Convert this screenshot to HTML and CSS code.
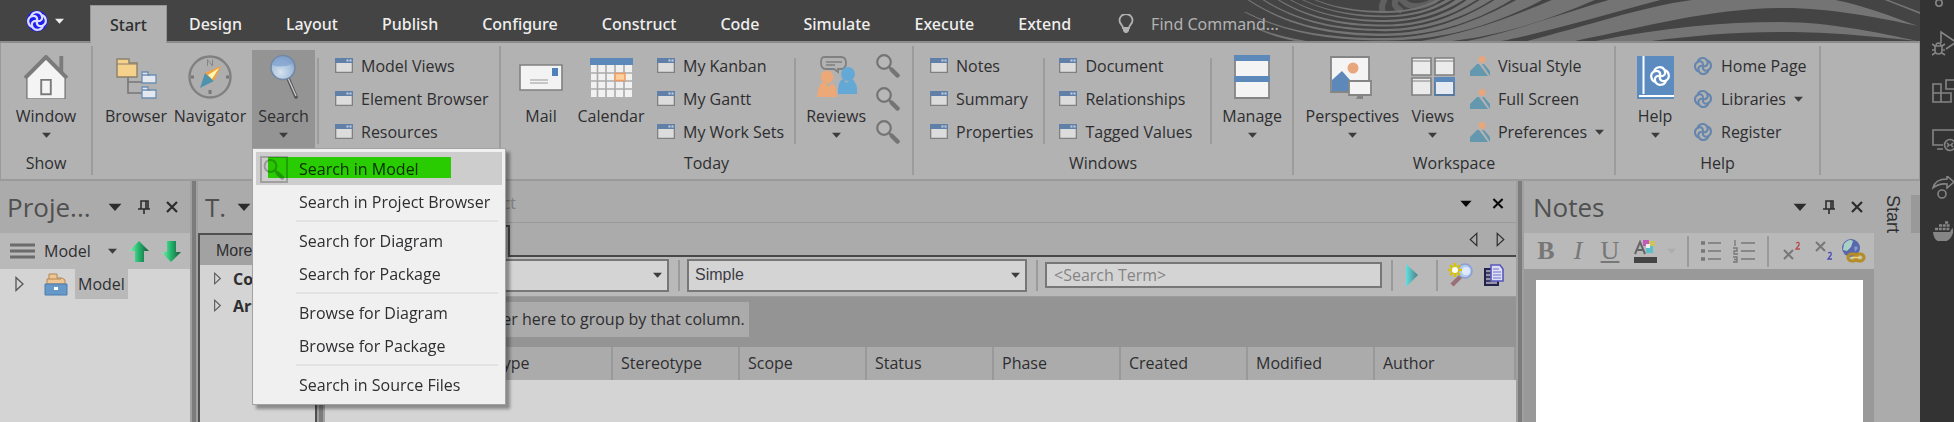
FILE: index.html
```html
<!DOCTYPE html>
<html lang="en">
<head>
<meta charset="utf-8">
<title>Model workspace</title>
<link rel="stylesheet" href="styles.css">
</head>
<body>
<svg class="defs" aria-hidden="true">
  <defs>
    <symbol id="knot" viewBox="0 0 24 24">
      <g fill="none" stroke="currentColor" stroke-width="2.4">
        <path d="M5.500 7A6.300 6.300 0 0 1 17 5.500A6.300 6.300 0 0 1 18.500 17A6.300 6.300 0 0 1 7 18.500A6.300 6.300 0 0 1 5.500 7z"/>
        <path d="M5.500 7C10 5 13 8 12 12C11 16 14 19 18.500 17M17 5.500C19 10 16 13 12 12C8 11 5 14 7 18.500"/>
      </g>
    </symbol>
    <symbol id="window" viewBox="0 0 18 15">
      <path d="M.5.500h17v14H.5z" fill="#dcdcdc" stroke="#808080" stroke-width="1.600"/>
      <path d="M0 0h18v5H0z" fill="#6080a8"/>
      <path d="M11.500 1.500h2v2h-2zM14.500 1.500h2v2h-2z" fill="#c3d0e0"/>
    </symbol>
    <symbol id="lens" viewBox="0 0 24 24">
      <circle cx="8" cy="8" r="6.800" fill="#bcbcbc" fill-opacity=".5" stroke="#747474" stroke-width="2.200"/>
      <path d="m13 13 3 3" stroke="#747474" stroke-width="2.500"/>
      <path d="m16 16 5.500 5.500" stroke="#747474" stroke-width="4.500" stroke-linecap="round"/>
    </symbol>
    <symbol id="scene" viewBox="0 0 20 20">
      <circle cx="12" cy="3.500" r="3.500" fill="#e8a67c"/>
      <path d="M0 20v-5l7-7h2l9 12zM12 8h2l6 7v5z" fill="#6398ae"/>
    </symbol>
    <symbol id="down" viewBox="0 0 8 5"><path d="M0 .5h8L4 5z" fill="currentColor"/></symbol>
    <symbol id="pin" viewBox="0 0 12 14"><path d="M3 1h7v8H3zM0 9h12M6 9v5M8 1v8" fill="none" stroke="currentColor" stroke-width="1.600"/></symbol>
    <symbol id="cross" viewBox="0 0 12 12"><path d="m1 1 10 10M11 1 1 11" stroke="currentColor" stroke-width="2.200"/></symbol>
    <symbol id="expand" viewBox="0 0 9 16"><path d="m1 1.500 7 6.500-7 6.500z" fill="none" stroke="currentColor" stroke-width="1.300"/></symbol>
    <linearGradient id="green" x2="1"><stop stop-color="#8ff0b4"/><stop offset=".45" stop-color="#27bd72"/><stop offset="1" stop-color="#17573b"/></linearGradient>
    <linearGradient id="teal" x2="1"><stop stop-color="#62dfe0"/><stop offset="1" stop-color="#4a8085"/></linearGradient>
    <radialGradient id="glass" cx=".4" cy=".7" r=".8"><stop stop-color="#d6e2ee"/><stop offset=".6" stop-color="#a3bddb"/><stop offset="1" stop-color="#6b8db8"/></radialGradient>
  </defs>
</svg>

<div class="shell">
  <div class="app">
    <header class="titlebar">
      <svg class="waves" viewBox="0 0 690 41" preserveAspectRatio="xMaxYMin slice" aria-hidden="true">
        <g fill="none" stroke="#606060" stroke-width="6"><path d="M155-1Q150 6 153 12M172 11Q160 5 168-2M170-3Q180 14 206 0"/></g>
        <g fill="#747474">
          <path d="M84-1C105 8 130 11 155 11C178 11 196 6 207-1L213-1C196 8 178 13 155 13C130 13 105 9 82-1z"/>
          <path d="M72-1C98 12 127 15.500 155 15.500C182 15.500 203 8 217-1L223-1C204 11 182 17.300 155 17.300C127 17.300 98 13 70-1z"/>
          <path d="M60-1C90 16 124 20 155 20C185 20 210 11 227-1L235-1C212 14 185 22 155 22C124 22 90 17 58-1z"/>
          <path d="M48-1C82 20 120 24.500 155 24.500C190 24.500 218 14 238-1L248-1C221 17 190 26.600 155 26.600C120 26.600 82 22 46-1z"/>
          <path d="M33-1C72 24 116 29 155 29C194 29 226 16 251-1L263-1C230 20 194 31.200 155 31.200C116 31.200 72 26 31-1z"/>
          <path d="M18-1C62 28 110 33.500 155 33.500C200 33.500 236 18 266-1L283-1C242 24 200 36 155 36C110 36 62 30 16-1z"/>
          <path d="M16 12C60 34 108 38 155 38C206 38 250 20 288-1L314-1C260 28 208 40.500 155 40.500C108 40.500 60 36 14 12z"/>
          <path d="M24 27C50 37 70 40 82 42L72 42C56 40 40 35 22 27z"/>
          <path d="M184 42C230 36 280 18 324-1L367-1C310 24 260 38 212 42z"/>
          <path d="M232 42C280 33 330 14 382-1L434-1C370 16 310 34 266 42z"/>
          <path d="M293 42C350 28 420 4 470-1L600-1C630 4 660 16 688 26C650 18 600 8 555 8C480 8 410 28 340 42z"/>
          <path d="M361 42C430 28 490 22 550 22C600 22 650 33 688 41C650 37 600 32 555 32C500 32 460 36 414 42z"/>
          <path d="M656-1 690 12V14Q675 8 652-1z"/>
        </g>
      </svg>
      <button class="appmenu" aria-label="Application menu">
        <svg class="i24"><circle cx="12" cy="12" r="10.500" fill="#1c1cf0"/><use href="#knot" x="1" y="1" width="22" height="22" color="#dcdcff"/></svg>
        <svg class="caret"><use href="#down"/></svg>
      </button>
      <nav class="tabs">
        <button class="tab tab-on">Start</button><button class="tab">Design</button><button class="tab">Layout</button><button class="tab">Publish</button><button class="tab">Configure</button><button class="tab">Construct</button><button class="tab">Code</button><button class="tab">Simulate</button><button class="tab">Execute</button><button class="tab">Extend</button>
      </nav>
      <label class="find">
        <svg width="16" height="20" viewBox="0 0 16 20"><path d="M5 14C5 11 1.500 10 1.500 6.500A6.300 6.300 0 0 1 14.500 6.500C14.500 10 11 11 11 14z" fill="none" stroke="#b2b2b2" stroke-width="1.800"/><path d="M5 15h6v2l-2 2H7l-2-2z" fill="#b2b2b2"/></svg>
        <input class="find-input" type="text" placeholder="Find Command..." aria-label="Find Command">
      </label>
    </header>

    <section class="ribbon">
      <div class="group g-show">
        <div class="tools">
          <button class="big"><svg viewBox="0 0 46 46"><path d="M37 13V1h4v20z" fill="#7b7b7b"/><path d="M3 46V24L23 4l20 20v22z" fill="#f4f4f4" stroke="#7b7b7b" stroke-width="1.500"/><path d="M1 24 23 2l22 22" fill="none" stroke="#7b7b7b" stroke-width="4"/><path d="M18 26h10v15H18z" fill="none" stroke="#7b7b7b" stroke-width="2"/></svg><span>Window</span><svg class="caret"><use href="#down"/></svg></button>
        </div>
        <h2 class="group-name">Show</h2>
      </div>
      <div class="group g-explore" aria-label="Explore">
        <div class="tools">
          <button class="big w-74"><svg viewBox="0 0 44 44"><path d="M14 22v16h14M14 27h14" fill="none" stroke="#777" stroke-width="1.600"/><path d="M3 4h12v4h8v14H3z" fill="#f6d18c" stroke="#8b806c" stroke-width="1.400"/><path d="M3 9h20" stroke="#8b806c"/><g fill="#e4e9ef" stroke="#6c8db3" stroke-width="1.300"><path d="M28 17h6v3h8v8H28zM28 32h6v3h8v8H28z"/><path d="M28 20h8M28 35h8"/></g></svg><span>Browser</span></button>
          <button class="big w-74"><svg viewBox="0 0 44 44"><circle cx="22" cy="22" r="20.500" fill="#aeaeae" stroke="#808080" stroke-width="2.400"/><path d="M19.500 11V4.500l5 6.500V4.500" fill="none" stroke="#858585"/><path d="M22 35v4M3 22h3M38 22h3" stroke="#777" stroke-width="3"/><path d="M12 33 17 18 26 26z" fill="#4d93ae"/><path d="M33 11 17 18l9 8z" fill="#f3a13a"/><path d="M31 13 20 20l4 4z" fill="#fff7b7"/></svg><span>Navigator</span></button>
          <div class="menu-host">
            <button class="big pressed" aria-expanded="true"><svg viewBox="0 0 44 44"><path d="m26 23 8 19" stroke="#555" stroke-width="3.600" stroke-linecap="round"/><path d="m26 23 8 18" stroke="#c7c7cf" stroke-width="1.400"/><circle cx="21" cy="12.500" r="12" fill="url(#glass)" stroke="#7187a3" stroke-width="1.500"/><path d="M10 10Q20 14 32 8Q26 0 17 2Q11 4 10 10" fill="#7da0cd" opacity=".7"/></svg><span>Search</span><svg class="caret"><use href="#down"/></svg></button>
            <div class="menu" role="menu">
              <button class="item item-on" role="menuitem"><span class="item-icon"><svg width="22" height="21" opacity=".6"><use href="#lens"/></svg></span>Search in Model<span class="marker"></span></button>
              <button class="item" role="menuitem">Search in Project Browser</button>
              <hr class="rule">
              <button class="item" role="menuitem">Search for Diagram</button>
              <button class="item" role="menuitem">Search for Package</button>
              <hr class="rule">
              <button class="item" role="menuitem">Browse for Diagram</button>
              <button class="item" role="menuitem">Browse for Package</button>
              <hr class="rule">
              <button class="item" role="menuitem">Search in Source Files</button>
            </div>
          </div>
          <div class="split"></div>
          <div class="stack views">
            <button class="small"><svg class="win"><use href="#window"/></svg>Model Views</button>
            <button class="small"><svg class="win"><use href="#window"/></svg>Element Browser</button>
            <button class="small"><svg class="win"><use href="#window"/></svg>Resources</button>
          </div>
        </div>
      </div>
      <div class="group g-today">
        <div class="tools">
          <button class="big w-60"><svg viewBox="0 0 44 44"><path d="M1 10h42v25H1z" fill="#f3f3f3" stroke="#808080" stroke-width="1.600"/><path d="M33 13h6v8h-6z" fill="#4f82b8"/><path d="M11 25h18M11 28h18" stroke="#999" stroke-width="1.200"/></svg><span>Mail</span></button>
          <button class="big w-80"><svg viewBox="0 0 44 44"><path d="M2 9h41v33H2z" fill="#f1f1f1"/><path d="M8.500 9v33M17 9v33M26 9v33M35 9v33M2 18h41M2 26h41M2 34h41" stroke="#aaa" stroke-width="1.600"/><path d="M1 3h43v7H1z" fill="#5c89b9"/><path d="M26 18.500h10v7H26z" fill="#ffd09c" stroke="#ee9c63" stroke-width="1.500"/></svg><span>Calendar</span></button>
          <div class="stack snug">
            <button class="small"><svg class="win"><use href="#window"/></svg>My Kanban</button>
            <button class="small"><svg class="win"><use href="#window"/></svg>My Gantt</button>
            <button class="small"><svg class="win"><use href="#window"/></svg>My Work Sets</button>
          </div>
          <div class="split"></div>
          <button class="big w-80"><svg viewBox="0 0 44 44"><path d="M10 2h17q5 0 5 6t-5 6h-3v3l-4-3H12q-5 0-5-6t3-6" fill="none" stroke="#808080" stroke-width="1.800"/><path d="M12 7h16M12 10h9" stroke="#808080" stroke-width="1.400"/><circle cx="13" cy="22" r="6.500" fill="#eda878"/><path d="M3 42q1-15 8-15l4 5 3-4q5 3 5 14z" fill="#eda878"/><circle cx="34" cy="19" r="7" fill="#64a8d6"/><path d="M24 39q0-15 6-15l2 4 6-4q6 4 5 15z" fill="#64a8d6"/></svg><span>Reviews</span><svg class="caret"><use href="#down"/></svg></button>
          <div class="stack lenses">
            <button class="small" aria-label="Find reviews"><svg width="24" height="24"><use href="#lens"/></svg></button>
            <button class="small" aria-label="Find discussions"><svg width="24" height="24"><use href="#lens"/></svg></button>
            <button class="small" aria-label="Find mail"><svg width="24" height="24"><use href="#lens"/></svg></button>
          </div>
        </div>
        <h2 class="group-name">Today</h2>
      </div>
      <div class="group g-windows">
        <div class="tools">
          <div class="stack">
            <button class="small"><svg class="win"><use href="#window"/></svg>Notes</button>
            <button class="small"><svg class="win"><use href="#window"/></svg>Summary</button>
            <button class="small"><svg class="win"><use href="#window"/></svg>Properties</button>
          </div>
          <div class="split"></div>
          <div class="stack wide">
            <button class="small"><svg class="win"><use href="#window"/></svg>Document</button>
            <button class="small"><svg class="win"><use href="#window"/></svg>Relationships</button>
            <button class="small"><svg class="win"><use href="#window"/></svg>Tagged Values</button>
          </div>
          <div class="split"></div>
          <button class="big w-80"><svg viewBox="0 0 44 44"><path d="M5 1h34v42H5z" fill="#f4f4f4" stroke="#858585" stroke-width="1.800"/><path d="M4 0h36v6H4zM4 21h36v6H4z" fill="#5c89b9"/></svg><span>Manage</span><svg class="caret"><use href="#down"/></svg></button>
        </div>
        <h2 class="group-name">Windows</h2>
      </div>
      <div class="group g-workspace">
        <div class="tools">
          <button class="big w-106"><svg viewBox="0 0 44 44"><path d="M1 2h38v35H1z" fill="#f4f4f4" stroke="#858585" stroke-width="1.800"/><path d="M2 25 12 16l8 9v11H2z" fill="#5c89b9"/><circle cx="23" cy="13" r="5.500" fill="#e8a67c"/><path d="M19 26h22v14H19z" fill="#f4f4f4" stroke="#858585" stroke-width="1.800"/><path d="M28 40h5v4h-7z" fill="#858585"/></svg><span>Perspectives</span><svg class="caret"><use href="#down"/></svg></button>
          <button class="big w-60"><svg viewBox="0 0 44 44"><g fill="#ebebeb" stroke="#808080" stroke-width="1.600"><path d="M1 3h19v17H1zM24 3h19v17H24zM1 23h19v17H1z"/></g><path d="M1 6h19M24 6h19M1 26h19" stroke="#808080"/><path d="M24 23h19v17H24z" fill="#e4e9f2" stroke="#56799f" stroke-width="1.800"/><path d="M23 22h21v5H23z" fill="#5c89b9"/></svg><span>Views</span><svg class="caret"><use href="#down"/></svg></button>
          <div class="stack scenes">
            <button class="small"><svg class="i20"><use href="#scene"/></svg>Visual Style</button>
            <button class="small"><svg class="i20"><use href="#scene"/></svg>Full Screen</button>
            <button class="small"><svg class="i20"><use href="#scene"/></svg>Preferences<svg class="caret"><use href="#down"/></svg></button>
          </div>
        </div>
        <h2 class="group-name">Workspace</h2>
      </div>
      <div class="group g-help">
        <div class="tools">
          <button class="big w-60"><svg viewBox="0 0 44 44"><path d="M4 1h37v43H4z" fill="#5c8cbf"/><path d="M10.500 1v38M6 41h35" stroke="#fff" stroke-width="2"/><use href="#knot" x="16" y="10" width="22" height="22" color="#fff"/></svg><span>Help</span><svg class="caret"><use href="#down"/></svg></button>
          <div class="stack scenes">
            <button class="small"><svg class="i20 blue"><use href="#knot"/></svg>Home Page</button>
            <button class="small"><svg class="i20 blue"><use href="#knot"/></svg>Libraries<svg class="caret"><use href="#down"/></svg></button>
            <button class="small"><svg class="i20 blue"><use href="#knot"/></svg>Register</button>
          </div>
        </div>
        <h2 class="group-name">Help</h2>
      </div>
    </section>

    <main class="work">
      <section class="panel project">
        <header class="panel-head"><h1 class="panel-title">Proje...</h1>
          <button class="tool" aria-label="Options"><svg width="14" height="8"><use href="#down"/></svg></button>
          <button class="tool" aria-label="Pin"><svg width="12" height="14"><use href="#pin"/></svg></button>
          <button class="tool" aria-label="Close"><svg width="12" height="12"><use href="#cross"/></svg></button>
        </header>
        <div class="bar">
          <button class="tool" aria-label="Menu"><svg width="25" height="16"><path d="M0 2h25M0 8h25M0 14h25" stroke="#6b6b6b" stroke-width="3"/></svg></button>
          <button class="tool model-pick">Model<svg class="caret"><use href="#down"/></svg></button>
          <button class="tool" aria-label="Move up"><svg width="20" height="21"><path d="M10 0 20 10h-5v11H6V10H0z" fill="url(#green)"/></svg></button>
          <button class="tool" aria-label="Move down"><svg width="20" height="21"><path d="M10 21 20 11h-5V0H6v11H0z" fill="url(#green)"/></svg></button>
        </div>
        <div class="tree">
          <div class="node"><svg class="twist" width="9" height="16"><use href="#expand"/></svg>
            <svg width="24" height="23"><path d="M3 11V6h2V1h8v4h5l3 2v4z" fill="#ecc795" stroke="#b58550"/><path d="M5 6h12" stroke="#b58550"/><path d="M1 11h22v11H1z" fill="#6699c8" stroke="#4b7dae"/><path d="M10 14h4v3h-4z" fill="#fff"/></svg>
            <span class="node-name">Model</span></div>
        </div>
      </section>
      <div class="sash"></div>
      <section class="panel toolbox">
        <header class="panel-head"><h1 class="panel-title">T.</h1><button class="tool" aria-label="Options"><svg width="14" height="8"><use href="#down"/></svg></button></header>
        <div class="toolbox-body">
          <div class="more">More</div>
          <div class="cat"><svg class="twist" width="9" height="13"><use href="#expand"/></svg>Com</div>
          <div class="cat"><svg class="twist" width="9" height="13"><use href="#expand"/></svg>Art</div>
        </div>
      </section>
      <div class="sash"></div>
      <section class="center">
        <div class="doc-tabs"><span class="doc-tab">Project</span>
          <button class="tool push" aria-label="List tabs"><svg width="12" height="7"><use href="#down"/></svg></button>
          <button class="tool" aria-label="Close"><svg width="12" height="11"><use href="#cross"/></svg></button>
        </div>
        <div class="view-tabs"><span class="view-tab"></span><div class="view-rest">
          <button class="tool flip" aria-label="Previous"><svg width="9" height="15"><use href="#expand"/></svg></button>
          <button class="tool" aria-label="Next"><svg width="9" height="15"><use href="#expand"/></svg></button></div>
        </div>
        <div class="query">
          <span class="pick pick-first"><select class="select" aria-label="Category"><option></option></select><svg class="caret"><use href="#down"/></svg></span>
          <i class="bar-line"></i>
          <span class="pick"><select class="select" aria-label="Search"><option>Simple</option></select><svg class="caret"><use href="#down"/></svg></span>
          <i class="bar-line"></i>
          <input class="term" type="text" placeholder="&lt;Search Term&gt;" aria-label="Search Term">
          <i class="bar-line"></i>
          <button class="tool run" aria-label="Run"><svg width="12" height="23"><path d="m0 0 12 11L0 23z" fill="url(#teal)"/></svg></button>
          <i class="bar-line"></i>
          <button class="tool new" aria-label="New search"><svg width="25" height="24"><path d="m4 22 9-9" stroke="#9a7077" stroke-width="4.500"/><circle cx="17" cy="8" r="7" fill="#b3cbf0" stroke="#8b9dd2" stroke-width="1.500"/><circle cx="18" cy="8" r="4" fill="#ddebfc"/><path d="M7 0v14M0 7h14M2 2l10 10M12 2 2 12" stroke="#d8c300" stroke-width="2.400"/><circle cx="7" cy="7" r="3" fill="#fff"/></svg></button>
          <button class="tool" aria-label="Copy"><svg width="20" height="22"><path d="M1 5h13v16H1z" fill="#9494a6" stroke="#22224c" stroke-width="2"/><path d="M2 9h5M2 13h5M2 17h5" stroke="#22224c" stroke-width="1.500"/><path d="M7 1h9l3 4v12H7z" fill="#dedef5" stroke="#5757bd" stroke-width="1.600"/><path d="M9 5h6M9 8h8M9 11h8M9 14h8" stroke="#7171c9" stroke-width="1.200"/></svg></button>
        </div>
        <div class="group-by"><span class="group-hint">Drag a column header here to group by that column.</span></div>
        <table class="results">
          <thead><tr><th class="c-mark"></th><th></th><th>Type</th><th>Stereotype</th><th>Scope</th><th>Status</th><th>Phase</th><th>Created</th><th>Modified</th><th class="c-last">Author</th></tr></thead>
        </table>
      </section>
      <div class="sash"></div>
      <section class="panel notes">
        <header class="panel-head"><h1 class="panel-title">Notes</h1>
          <button class="tool" aria-label="Options"><svg width="14" height="8"><use href="#down"/></svg></button>
          <button class="tool" aria-label="Pin"><svg width="12" height="14"><use href="#pin"/></svg></button>
          <button class="tool" aria-label="Close"><svg width="12" height="12"><use href="#cross"/></svg></button>
        </header>
        <div class="bar format">
          <button class="tool fmt"><b>B</b></button><button class="tool fmt"><i>I</i></button><button class="tool fmt"><u>U</u></button>
          <button class="tool color" aria-label="Text colour"><svg width="23" height="24"><path d="M1 15 6 3l5 12M3 11h6" fill="none" stroke="#666" stroke-width="2"/><path d="M9 1h6v6H9z" fill="#c05bb6"/><path d="M15 2h6v5h-6z" fill="#cfc259"/><path d="M12 7h7v7h-7z" fill="#5bbfca"/><path d="M12 5h4v4h-4z" fill="#eee"/><path d="M0 18h23v6H0z" fill="#444"/></svg><svg class="caret faint"><use href="#down"/></svg></button>
          <i class="bar-line"></i>
          <button class="tool list" aria-label="Bullets"><svg width="20" height="20"><path d="M0 2h4M0 10h4M0 18h4" stroke="#777" stroke-width="3.500"/><path d="M7 2h13M7 10h13M7 18h13" stroke="#777" stroke-width="1.600"/></svg></button>
          <button class="tool list" aria-label="Numbering"><svg width="22" height="24"><path d="M2 1v6M0 9h4v3H1v3h4M0 18h4v5H0M1 20.500h3" fill="none" stroke="#777" stroke-width="1.300"/><path d="M8 4h14M8 12h14M8 20h14" stroke="#777" stroke-width="1.600"/></svg></button>
          <i class="bar-line"></i>
          <button class="tool script" aria-label="Superscript"><svg width="18" height="20"><path d="m1 9 9 9M10 9l-9 9" stroke="#777" stroke-width="2"/><path d="M13 2q4-2 3 2l-3 4h4" fill="none" stroke="#b54c4c" stroke-width="1.300"/></svg></button>
          <button class="tool script" aria-label="Subscript"><svg width="18" height="20"><path d="m1 1 9 9M10 1l-9 9" stroke="#777" stroke-width="2"/><path d="M13 12q4-2 3 2l-3 4h4" fill="none" stroke="#4c4cb5" stroke-width="1.300"/></svg></button>
          <button class="tool link" aria-label="Link"><svg width="24" height="24"><circle cx="9" cy="9" r="9" fill="#5868ab"/><path d="M2 5q5-6 9-3l-2 6-4 4-4-1z" fill="#a9cfc7"/><path d="M12 8q3-2 4 1l-3 4z" fill="#8397d2"/><g fill="none" stroke="#b48d26" stroke-width="3"><rect x="6" y="15" width="9" height="7" rx="3.500"/><rect x="13" y="15" width="9" height="7" rx="3.500"/></g><path d="M9 18.500h10" stroke="#efd673" stroke-width="1.500"/></svg></button>
        </div>
        <div class="notes-body"><textarea class="note" aria-label="Notes"></textarea></div>
      </section>
      <aside class="side-tabs"><button class="side-tab">Start</button><span class="side-mark"></span></aside>
    </main>
  </div>

  <aside class="activity">
    <svg width="22" height="184" viewBox="0 0 22 184" fill="none" stroke="#858585" stroke-width="1.600">
      <circle cx="7" cy="3" r="3.200"/>
      <path d="M9 43V32l15 10-10 7"/><path d="M3 46h7v4q0 4-3.500 4T3 50zM0 44l3 2M13 44l-3 2M0 50h3M10 50h3M0 55l3-2M13 55l-3-2M4 46q0-3 2.500-3T9 46"/>
      <path d="M1 84h8v9h10v9H1zM9 93v9M1 93h8M14 80h10v9H14z"/>
      <path d="M11 145H1v-15h24M5 149h6"/><circle cx="18" cy="145" r="5.500"/><path d="m15 143 2 2-2 2M21 143l-2 2 2 2"/>
    </svg>
    <svg class="clip" width="22" height="65" viewBox="0 0 22 65" fill="none" stroke="#858585" stroke-width="1.600">
      <path d="M1 12Q3 3 15 3V0l7 6-7 6V8Q7 7 1 12z"/><circle cx="10" cy="18" r="4"/>
      <path d="M1 56h17q1-3 3-4v5q-3 9-11 9T1 56z" fill="#858585" stroke="none"/><path d="M3 53h15M7 49.500h11M13 46.500h4" stroke-width="2.600" stroke-dasharray="3 .8"/>
    </svg>
  </aside>
</div>
</body>
</html>
```
FILE: styles.css
```css
* { box-sizing: border-box; }
body { margin: 0; background: #ababab; color: #2e2e30; font: 16px/20px "Open Sans", "Noto Sans", sans-serif; }
button { font: inherit; color: inherit; background: none; border: 0; padding: 0; margin: 0; }
h1, h2 { margin: 0; font-weight: 400; }
svg { display: block; flex: none; }
.defs { position: absolute; width: 0; height: 0; }
.caret { width: 9px; height: 6px; color: #3c3c3c; }
.i20 { width: 20px; height: 20px; }
.i24 { width: 24px; height: 24px; }
.blue { color: #6485ae; }
.shell { display: flex; min-height: 100vh; }
.app { flex: 1; min-width: 0; display: flex; flex-direction: column; }

.titlebar { position: relative; display: flex; align-items: flex-end; height: 43px; background: #444; border-bottom: 2px solid #8c8c8c; }
.waves { position: absolute; right: 0; top: 0; width: 690px; height: 41px; }
.appmenu { display: flex; align-items: center; gap: 6px; width: 90px; height: 41px; padding-left: 25px; }
.appmenu .caret { color: #eee; }
.tabs { display: flex; }
.tab { height: 36px; padding: 2px 22px 0; color: #efefef; font: 500 16px/20px "Noto Sans", "Open Sans", sans-serif; }
.tab-on { height: 38px; margin-bottom: -2px; padding: 2px 19px; background: #b2b2b2; color: #2e2e30; border: 1px solid #969696; border-bottom: 0; }
.find { position: relative; display: flex; align-items: center; gap: 17px; height: 36px; margin-left: 25px; padding-top: 2px; }
.find-input { width: 140px; padding: 0; background: none; border: 0; color: #b2b2b2; font: 16px/20px "Noto Sans", "Open Sans", sans-serif; }
.find-input::placeholder { color: #b2b2b2; opacity: 1; }

.ribbon { display: flex; height: 138px; padding: 3px 0 4px; background: #b2b2b2; border: solid #9a9a9a; border-width: 0 1px 2px; }
.group { display: flex; flex-direction: column; border-right: 2px solid #9c9c9c; }
.g-show { width: 92px; }
.g-explore { width: 408px; }
.g-today { width: 413px; }
.g-windows { width: 380px; }
.g-workspace { width: 322px; }
.g-help { width: 205px; }
.tools { display: flex; height: 104px; }
.g-show .tools { justify-content: center; }
.g-explore .tools { padding-left: 6px; }
.g-today .tools { padding-left: 10px; }
.g-windows .tools { padding-left: 2px; }
.g-workspace .tools { padding-left: 7px; }
.g-help .tools { padding-left: 9px; }
.group-name { font-size: 16px; line-height: 20px; text-align: center; padding-top: 3px; }
.big { display: flex; flex-direction: column; align-items: center; height: 98px; margin-top: 4px; padding-top: 5px; }
.big > svg:first-child { width: 44px; height: 44px; }
.big span { padding-top: 7px; line-height: 21px; }
.big .caret { margin-top: 5px; }
.w-60 { width: 60px; }
.w-74 { width: 74px; }
.w-80 { width: 80px; }
.w-106 { width: 106px; }
.pressed { width: 63px; background: #949494; }
.stack { display: flex; flex-direction: column; padding: 3px 10px 0 14px; }
.views { padding-left: 16px; }
.snug { padding-left: 6px; }
.wide { padding-right: 18px; }
.lenses { padding-left: 0; }
.scenes { padding-left: 8px; }
.small { display: flex; align-items: center; gap: 8px; height: 33px; white-space: nowrap; }
.win { width: 18px; height: 15px; }
.split { width: 2px; height: 86px; margin-top: 12px; background: #9c9c9c; }

.menu-host { position: relative; margin: 0 2px 0 5px; }
.menu { position: absolute; z-index: 5; left: 0; top: 102px; padding: 3px; background: #f0f0f0; border: 1px solid #a2a2a2; box-shadow: 4px 4px 3px rgba(0, 0, 0, .35); }
.item { position: relative; display: flex; align-items: center; width: 100%; height: 33px; padding: 0 12px 0 43px; white-space: nowrap; }
.item-on { background: #cdcdcd; }
.item-icon { position: absolute; left: 4px; top: 4px; padding: 1px; border: 2px solid #a0a0a0; }
.marker { position: absolute; left: 12px; top: 5px; width: 183px; height: 21px; background: #31fe00; mix-blend-mode: multiply; }
.rule { height: 2px; margin: 2px 4px 2px 40px; border: 0; background: #e2e2e2; }

.work { flex: 1; display: flex; }
.panel { display: flex; flex-direction: column; }
.panel-head { display: flex; align-items: center; height: 52px; color: #2c2c2c; }
.panel-title { flex: 1; font-size: 26px; line-height: 32px; color: #505050; }
.tool { display: flex; align-items: center; justify-content: center; }
.bar { display: flex; align-items: center; height: 36px; background: #b9b9b9; }
.bar-line { width: 2px; height: 31px; background: #9a9a9a; }
.sash { width: 8px; border: solid #a0a0a0; border-width: 0 2px; background: #7c7c7c; }

.project { width: 190px; }
.project .panel-head { padding: 0 12px 0 7px; gap: 16px; }
.project .bar { padding-left: 10px; gap: 12px; }
.model-pick { gap: 17px; margin-left: -3px; }
.tree { flex: 1; background: #d4d4d4; }
.node { display: flex; align-items: center; height: 30px; padding-left: 15px; }
.twist { color: #555; margin-right: 20px; }
.node-name { margin-left: 7px; padding: 5px 3px; background: #b9b9b9; }
.toolbox { width: 119px; }
.toolbox .panel-head { padding: 0 7px; }
.toolbox .panel-title { flex: none; width: 32px; }
.toolbox-body { flex: 1; background: #d4d4d4; border: 2px solid #505050; border-bottom: 0; }
.more { height: 30px; padding: 4px 16px; background: #a2a2a2; font: 16px/24px "Liberation Sans", Arial, sans-serif; }
.cat { display: flex; align-items: center; height: 27px; padding-left: 13px; font-weight: 700; }
.cat .twist { margin-right: 11px; }

.center { flex: 1; min-width: 0; background: #d4d4d4; }
.doc-tabs { display: flex; align-items: center; height: 42px; padding: 3px 12px 0 0; background: #ababab; border-bottom: 1px solid #9a9a9a; color: #080808; }
.doc-tab { width: 191px; text-align: right; color: #808080; }
.push { margin-left: auto; margin-right: 20px; }
.view-tabs { display: flex; height: 34px; background: #ababab; }
.view-tab { width: 185px; margin-top: 2px; border: 2px solid #484848; border-width: 2px 2px 0 0; }
.view-rest { flex: 1; display: flex; align-items: center; justify-content: flex-end; gap: 18px; padding-right: 11px; border-bottom: 2px solid #484848; }
.flip { transform: scaleX(-1); }
.query { display: flex; align-items: center; height: 40px; padding: 0 12px 3px 0; background: #b9b9b9; border-bottom: 1px solid #9c9c9c; }
.pick { display: grid; width: 340px; margin-right: 9px; align-items: center; }
.pick-first { width: 344px; }
.pick .caret { grid-area: 1 / 1; justify-self: end; margin-right: 7px; pointer-events: none; }
.select { grid-area: 1 / 1; appearance: none; width: 100%; height: 33px; padding: 0 6px; border: 2px solid #777; border-radius: 0; background: #d4d4d4; color: #3c3c46; font: 16px/20px "Liberation Sans", Arial, sans-serif; }
.query .bar-line { margin-right: 7px; }
.term { flex: 1; min-width: 0; height: 26px; padding: 0 7px; margin-right: 9px; border: 2px solid #777; background: #d4d4d4; font: inherit; }
.term::placeholder { color: #848484; opacity: 1; }
.run { margin: 0 18px 0 6px; }
.new { margin: 0 11px 0 3px; }
.group-by { display: flex; align-items: flex-start; height: 50px; padding: 5px 0 0 12px; background: #949494; }
.group-hint { padding: 7px 4px 8px 15px; background: #ababab; }
.results { width: 100%; table-layout: fixed; border-collapse: collapse; background: #ababab; }
.results th { width: 127px; height: 33px; padding: 0 8px 2px; border-right: 2px solid #999; font-weight: 400; text-align: left; }
.results .c-mark { width: 33px; }
.results .c-last { width: auto; }

.notes { width: 350px; background: #999; }
.notes .panel-head { padding: 0 11px 0 9px; gap: 16px; background: #ababab; }
.format { padding-left: 13px; color: #777; font: 26px/30px "Liberation Serif", "Times New Roman", serif; }
.fmt { width: 18px; margin-right: 14px; }
.color { gap: 10px; margin: 0 11px 0 1px; }
.faint { color: #adadad; }
.list { margin-left: 12px; }
.list + .bar-line { margin-left: 12px; }
.script { margin-left: 14px; }
.link { margin-left: 9px; }
.notes-body { flex: 1; display: flex; padding: 11px 11px 0 12px; }
.note { flex: 1; border: 0; resize: none; background: #fff; }
.side-tabs { display: flex; align-items: flex-start; width: 46px; padding-top: 14px; justify-content: space-between; background: #ababab; }
.side-tab { margin-left: 8px; writing-mode: vertical-rl; font: 18px/22px "Liberation Sans", Arial, sans-serif; }
.side-mark { width: 9px; height: 38px; background: #999; }
.activity { width: 34px; padding-left: 12px; background: #333; overflow: hidden; }
.clip { margin-top: -8px; }
```
